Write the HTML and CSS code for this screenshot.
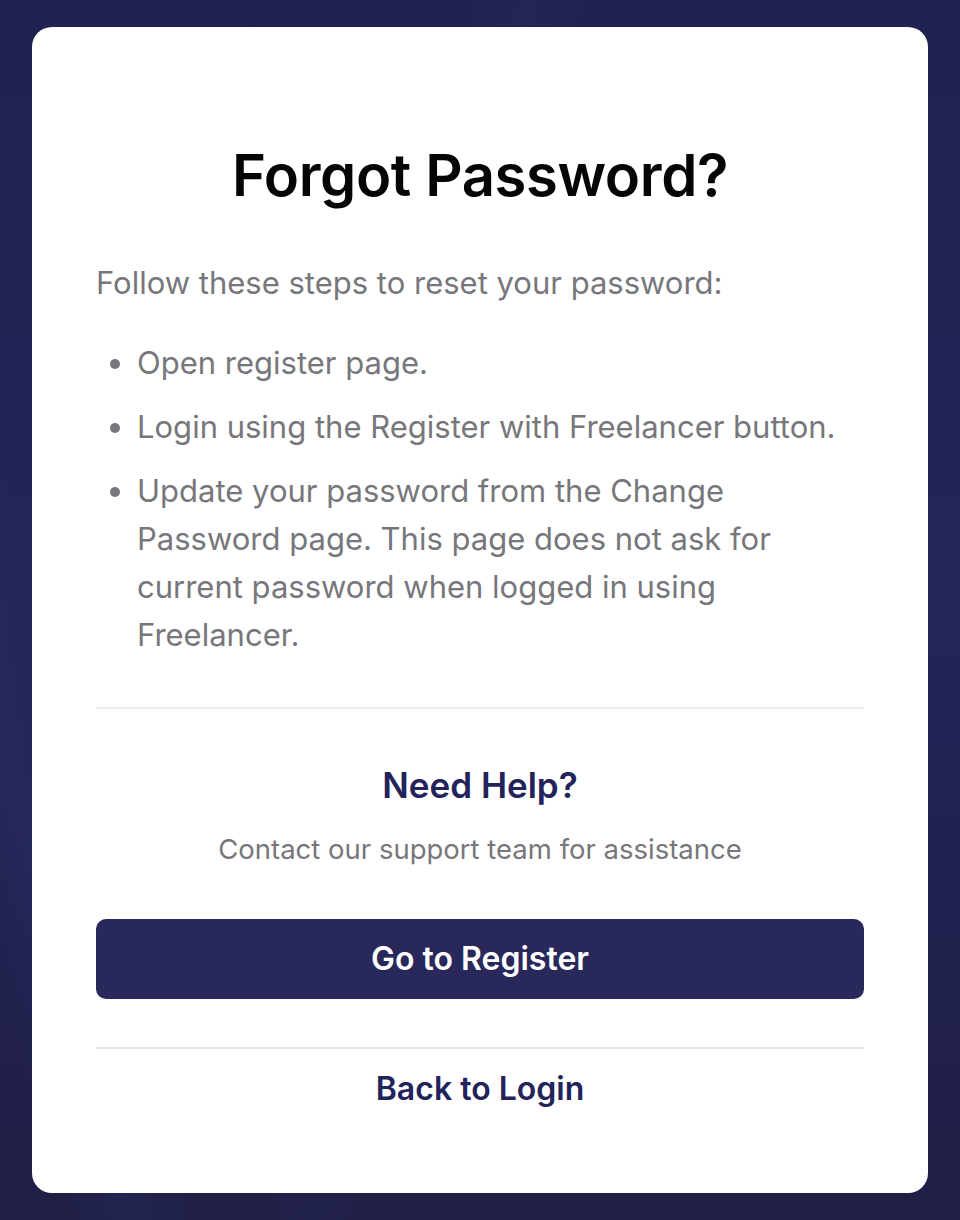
FILE: index.html
```html
<!DOCTYPE html>
<html>
<head>
    <link rel="stylesheet" href="styles.css">
</head>
<body>
    <div class="card">
        <h1 class="title">Forgot Password?</h1>

        <p class="intro">Follow these steps to reset your password:</p>
        <ul class="steps">
            <li>Open register page.</li>
            <li>Login using the Register with Freelancer button.</li>
            <li>Update your password from the Change Password page. This page does not ask for current password when logged in using Freelancer.</li>
        </ul>

        <div class="help">
            <h2>Need Help?</h2>
            <p>Contact our support team for assistance</p>
        </div>

        <a class="btn-register" href="#">Go to Register</a>

        <div class="back">
            <a href="#">Back to Login</a>
        </div>
    </div>
</body>
</html>
```

FILE: styles.css
```css
body {
    margin: 0;
    min-height: 1220px;
    box-sizing: border-box;
    padding: 27px 32px;
    font-family: Inter, "Noto Sans", sans-serif;
    background-color: #202148;
    background-image:
        linear-gradient(100deg, transparent 40%, rgba(60, 70, 150, 0.08) 45%, transparent 50%),
        linear-gradient(75deg, transparent 5%, rgba(60, 80, 160, 0.12) 10%, transparent 16%),
        linear-gradient(180deg, #222250 0%, #232458 50%, #1f1f46 100%);
}

.card {
    background: #fff;
    border-radius: 20px;
    padding: 113px 64px 80px;
}

.title {
    margin: 0;
    text-align: center;
    font-size: 58px;
    line-height: 70px;
    font-weight: 600;
    color: #050505;
    letter-spacing: -0.4px;
}

.intro {
    margin: 49px 0 0;
    font-size: 31px;
    line-height: 48px;
    color: #77777b;
}

.steps {
    margin: 32px 0 0;
    padding: 0 0 48px 41px;
    border-bottom: 2px solid #ebebef;
    font-size: 31px;
    line-height: 48px;
    color: #77777b;
}
.steps li + li {
    margin-top: 16px;
}

.help {
    text-align: center;
    padding-top: 55px;
}
.help h2 {
    margin: 0;
    font-size: 35px;
    line-height: 42px;
    font-weight: 600;
    color: #22235a;
}
.help p {
    margin: 24px 0 0;
    font-size: 27.5px;
    line-height: 39px;
    color: #77777b;
}

.btn-register {
    display: block;
    margin-top: 50px;
    height: 80px;
    line-height: 80px;
    border-radius: 10px;
    background: #28285a;
    color: #fff;
    text-align: center;
    text-decoration: none;
    font-size: 32px;
    font-weight: 600;
}

.back {
    margin-top: 48px;
    border-top: 2px solid #e4e4e8;
    padding-top: 16px;
    text-align: center;
}
.back a {
    font-size: 32px;
    line-height: 48px;
    font-weight: 600;
    color: #22235a;
    text-decoration: none;
}
```
